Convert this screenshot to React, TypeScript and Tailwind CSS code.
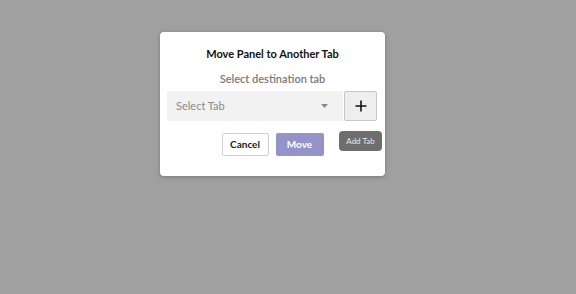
export default function App() {
  return (
    <div className="min-h-[294px] w-full bg-[#a0a0a0] pl-[160px] pt-[32px]" style={{ fontFamily: 'Lato, "Noto Sans", sans-serif' }}>
      <div className="w-[225px] h-[144px] rounded-[4px] bg-white shadow-[0_1px_4px_rgba(0,0,0,0.25)] px-[7px] pt-[15px]">
        <h2 className="text-center text-[11px] font-bold leading-[14px] text-[#111]">Move Panel to Another Tab</h2>
        <p className="mt-[11px] text-center text-[11px] font-semibold leading-[14px] text-[#7a7a7a]">Select destination tab</p>
        <div className="relative mt-[5px] flex items-center gap-px">
          <div className="flex h-[30px] w-[176px] items-center justify-between bg-[#f2f2f2] pl-[9px] pr-[15px]">
            <span className="text-[11px] text-[#8a8a8a]">Select Tab</span>
            <svg width="7" height="4" viewBox="0 0 7 4"><path d="M0 0h7L3.5 4z" fill="#8a8a8a" /></svg>
          </div>
          <button className="flex h-[30px] w-[33px] items-center justify-center rounded-[2px] border border-[#c8c8c8] bg-[#eeeeee]">
            <svg width="12" height="12" viewBox="0 0 12 12"><path d="M6 0.5v11M0.5 6h11" stroke="#111" strokeWidth="1.6" /></svg>
          </button>
          <div className="absolute left-[172px] top-[40px] flex h-[20px] w-[43px] items-center justify-center rounded-[4px] bg-[#6e6e6e] text-[8px] text-[#e8e8e8]">Add Tab</div>
        </div>
        <div className="mt-[12px] flex justify-center gap-[7px]">
          <button className="h-[23px] w-[47px] rounded-[2px] border border-[#cfcfcf] bg-white text-[10px] font-bold text-[#222]">Cancel</button>
          <button className="h-[23px] w-[48px] rounded-[2px] bg-[#9494c9] text-[10px] font-bold text-white">Move</button>
        </div>
      </div>
    </div>
  )
}
